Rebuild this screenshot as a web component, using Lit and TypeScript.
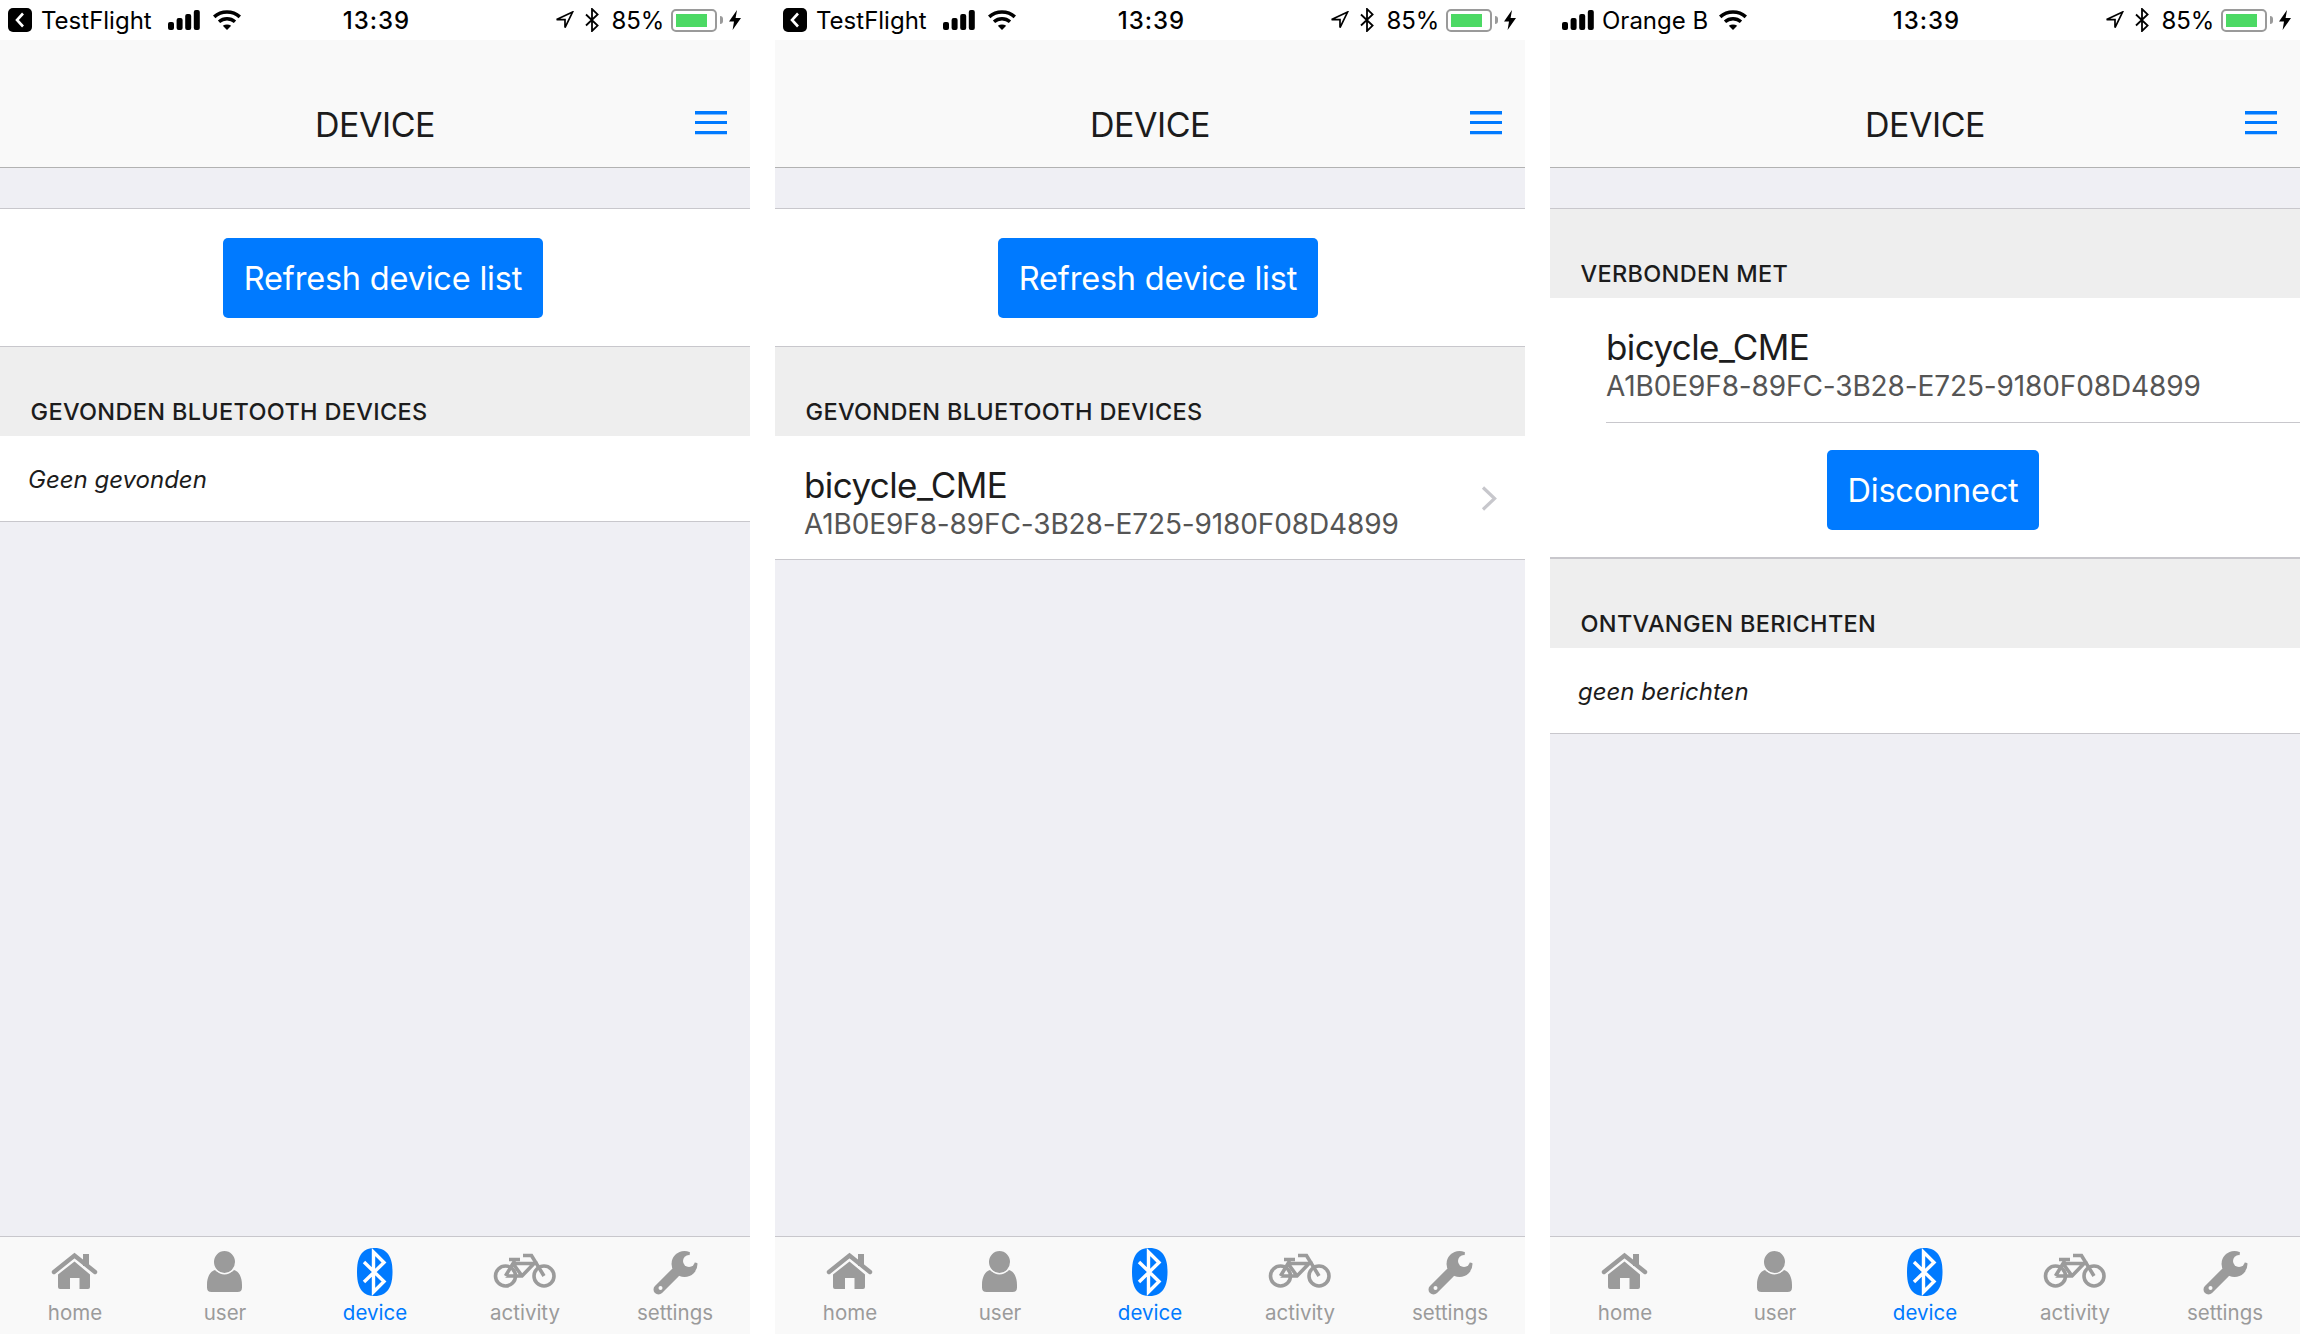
import { LitElement, html, css, svg } from 'lit';
import { customElement, property } from 'lit/decorators.js';

const DEVICE_NAME = 'bicycle_CME';
const DEVICE_UUID = 'A1B0E9F8-89FC-3B28-E725-9180F08D4899';

const signalIcon = svg`<svg class="signal" viewBox="0 0 32 20" width="32" height="20">
  <rect x="0" y="12" width="6" height="8" rx="2"/>
  <rect x="8.6" y="8" width="6" height="12" rx="2"/>
  <rect x="17.2" y="4" width="6" height="16" rx="2"/>
  <rect x="25.8" y="0" width="6" height="20" rx="2"/>
</svg>`;

const wifiIcon = svg`<svg viewBox="0 0 28 20" width="28" height="20" fill="none" stroke="#000">
  <path d="M1.2 6.8C8.4 .4 19.6 .4 26.8 6.800" stroke-width="3.600"/>
  <path d="M6 11.800C10.600 7.800 17.400 7.800 22 11.800" stroke-width="3.400"/>
  <path d="M9.800 15.800C12.300 14 15.700 14 18.200 15.800L14 20Z" fill="#000" stroke="none"/>
</svg>`;

const locationIcon = svg`<svg viewBox="0 0 19 18" width="19" height="18" fill="none" stroke="#000" stroke-width="1.7" stroke-linejoin="miter">
  <path d="M17.6 1 1.6 8.6H10V16.6Z"/>
</svg>`;

const btGlyph = svg`<svg viewBox="0 0 14 24" width="14" height="24" fill="none" stroke="#000" stroke-width="1.8">
  <path d="M1 6.5 12.6 17.6 7 23V1L12.6 6.4 1 17.5"/>
</svg>`;

const boltIcon = svg`<svg viewBox="0 0 12 20" width="12" height="20"><path d="M8 0 0 11.4H5L3.6 20 12 8H6.6Z" fill="#000"/></svg>`;

const menuIcon = svg`<svg viewBox="0 0 32 24" width="32" height="24"><path d="M0 0H32V3.4H0ZM0 10H32V13H0ZM0 20H32V23.2H0Z" fill="#007aff"/></svg>`;

const chevronIcon = svg`<svg viewBox="0 0 16 25" width="16" height="25" fill="none" stroke="#c7c7cc" stroke-width="3.2"><path d="M2 1.5 13.6 12.5 2 23.5"/></svg>`;

const homeIcon = svg`
  <path d="M11 24 31.5 7.5 52 24" fill="none" stroke="currentColor" stroke-width="4.4" stroke-linecap="round"/>
  <rect x="40" y="6" width="6" height="12"/>
  <path d="M15 26.5 31.5 13.4 47 26.5V39a2 2 0 0 1-2 2H36.5V30H27V41H17a2 2 0 0 1-2-2Z"/>`;

const userIcon = svg`
  <path d="M14 37C14 29 17 23.500 22 22 25.500 26.500 37.500 26.500 41 22 46 23.500 49 29 49 37V39.500Q49 44 44.500 44H18.500Q14 44 14 39.500Z"/>
  <ellipse cx="31.500" cy="14" rx="11.200" ry="11.700" stroke="#f9f9f9" stroke-width="1.400"/>`;

const bluetoothIcon = svg`
  <path d="M31.500 0C45 0 49.500 10 49.500 24 49.500 38 45 48 31.500 48 18 48 14 38 14 24 14 10 18 0 31.500 0Z"/>
  <path d="M21 14 41 33.500 30.500 44V4L41 14.500 21 34" fill="none" stroke="#fff" stroke-width="3.400"/>`;

const bikeIcon = svg`
  <g fill="none" stroke="currentColor" stroke-width="3.600">
    <circle cx="12.500" cy="28" r="10"/>
    <circle cx="51" cy="28" r="10"/>
    <path d="M12.500 28H29L41 15.500H20L12.500 28M20 15.500 29 28M21 11.500V15.500"/>
    <path d="M16 11.500H27M30 7.500H38.500L51 28"/>
  </g>`;

const wrenchIcon = svg`
  <circle cx="41.500" cy="16" r="13"/>
  <path d="M46 13 47.500 -1H62V17Z" fill="#f9f9f9"/>
  <circle cx="46" cy="13" r="6" fill="#f9f9f9"/>
  <path d="M32 25 15.500 41.500" fill="none" stroke="currentColor" stroke-width="10" stroke-linecap="round"/>
  <circle cx="17.500" cy="40" r="2" fill="#f9f9f9"/>`;

const TABS = [
  { label: 'home', icon: homeIcon },
  { label: 'user', icon: userIcon },
  { label: 'device', icon: bluetoothIcon, active: true },
  { label: 'activity', icon: bikeIcon },
  { label: 'settings', icon: wrenchIcon },
];

@customElement('device-screen')
export class DeviceScreen extends LitElement {
  // scan-empty, scan-found or connected
  @property({ type: String }) mode = 'scan-empty';

  static styles = css`
    :host {
      display: flex;
      flex-direction: column;
      width: 750px;
      height: 1334px;
      background: #efeff4;
      color: #1c1c1c;
      font-family: Inter, 'Noto Sans', sans-serif;
    }

    .status {
      display: grid;
      grid-template-columns: 1fr auto 1fr;
      align-items: center;
      height: 40px;
      padding: 0 9px 0 8px;
      box-sizing: border-box;
      background: #fff;
      color: #000;
      font-size: 24px;
      flex: none;
    }
    .status-left, .status-right { display: flex; align-items: center; }
    .status-right { justify-content: flex-end; }
    .back {
      display: flex;
      align-items: center;
      justify-content: center;
      width: 24px;
      height: 24px;
      margin-right: 9px;
      border-radius: 5px;
      background: #000;
    }
    .signal { fill: #000; }
    .orange { margin-left: 4px; }
    .carrier { margin-right: 16px; }
    .carrier.operator { margin: 0 11px 0 8px; }
    .spacer-wifi { width: 13px; }
    .time { font-size: 24px; font-weight: 500; letter-spacing: 1px; padding-left: 4px; }
    .battery {
      display: flex;
      width: 46px;
      height: 23px;
      padding: 3px;
      box-sizing: border-box;
      border: 2px solid #9a9a9a;
      border-radius: 5px;
    }
    .battery span { width: 85%; background: #4cd964; }
    .nub { width: 3px; height: 8px; margin: 0 6px 0 3px; background: #9a9a9a; border-radius: 0 3px 3px 0; }
    .gap-bt { width: 11px; }
    .pct { margin: 0 7px 0 13px; letter-spacing: -0.2px; }

    .nav {
      display: grid;
      grid-template-columns: 1fr auto 1fr;
      align-items: center;
      flex: none;
      height: 128px;
      padding-top: 43px;
      box-sizing: border-box;
      background: #f9f9f9;
      border-bottom: 1px solid #b2b2b2;
    }
    .nav h1 { grid-column: 2; margin: 0; font-size: 34px; font-weight: 400; letter-spacing: -0.5px; line-height: 34px; }
    .nav .menu { justify-self: end; margin: 0 23px 4px 0; display: flex; }

    main { flex: 1; padding-top: 40px; }

    .block {
      display: flex;
      justify-content: center;
      padding: 29px 0 28px 16px;
      background: #fff;
      border-top: 1px solid #c8c7cc;
      border-bottom: 1px solid #c8c7cc;
    }
    .block.plain { border-top: none; padding-top: 27px; padding-bottom: 27px; border-bottom-width: 2px; }
    .btn {
      display: flex;
      align-items: center;
      height: 80px;
      padding: 0 20.500px;
      box-sizing: border-box;
      border-radius: 5px;
      background: #007aff;
      color: #fff;
      font-size: 32.500px;
      letter-spacing: -0.2px;
    }

    .header {
      height: 89px;
      padding: 50px 0 0 30.500px;
      box-sizing: border-box;
      background: #eee;
      font-size: 23.500px;
      font-weight: 500;
      letter-spacing: 0.32px;
      line-height: 29px;
    }
    .header.first { border-top: 1px solid #c8c7cc; height: 90px; }

    .row {
      display: flex;
      align-items: center;
      background: #fff;
      border-bottom: 1px solid #c8c7cc;
    }
    .row.empty { height: 83px; padding: 2px 0 0 28px; font-size: 24px; font-style: italic; }
    .row.device {
      height: 124px;
      box-sizing: border-box;
      padding: 10px 28px 0 29px;
      justify-content: space-between;
    }
    .row .chevron { display: flex; margin-bottom: 8px; }

    .connected { background: #fff; padding-left: 56px; }
    .connected .info { height: 125px; border-bottom: 1px solid #c8c7cc; box-sizing: border-box; padding-top: 27px; }

    .name { font-size: 35px; line-height: 44px; letter-spacing: -0.6px; }
    .uuid { font-size: 28px; line-height: 35px; letter-spacing: -0.12px; color: #555; }

    .tabs {
      display: grid;
      grid-template-columns: repeat(5, 1fr);
      flex: none;
      height: 98px;
      box-sizing: border-box;
      background: #f9f9f9;
      border-top: 1px solid #c8c7cc;
    }
    .tab {
      display: flex;
      flex-direction: column;
      align-items: center;
      padding-top: 11px;
      color: #9b9b9b;
      font-size: 20.500px;
      line-height: 26px;
    }
    .tab svg { fill: currentColor; margin-bottom: 4px; }
    .tab.active { color: #007aff; }
  `;

  renderStatus() {
    const connected = this.mode === 'connected';
    return html`
      <div class="status">
        <div class="status-left">
          ${connected
            ? html`<span class="orange"></span>${signalIcon}<span class="carrier operator">Orange B</span>`
            : html`
                <span class="back">
                  <svg viewBox="0 0 10 16" width="10" height="16" fill="none" stroke="#fff" stroke-width="2.600"><path d="M8 1.500 2 8l6 6.500"/></svg>
                </span>
                <span class="carrier">TestFlight</span>${signalIcon}<span class="spacer-wifi"></span>`}
          ${wifiIcon}
        </div>
        <div class="time">13:39</div>
        <div class="status-right">
          ${locationIcon}<span class="gap-bt"></span>${btGlyph}
          <span class="pct">85%</span>
          <span class="battery"><span></span></span><span class="nub"></span>${boltIcon}
        </div>
      </div>
    `;
  }

  renderTabs() {
    return html`
      <nav class="tabs">
        ${TABS.map(
          (t) => html`
            <div class="tab ${t.active ? 'active' : ''}">
              <svg viewBox="0 0 64 48" width="64" height="48">${t.icon}</svg>
              <span>${t.label}</span>
            </div>
          `
        )}
      </nav>
    `;
  }

  renderScan() {
    return html`
      <div class="block"><div class="btn">Refresh device list</div></div>
      <div class="header">GEVONDEN BLUETOOTH DEVICES</div>
      ${this.mode === 'scan-found'
        ? html`
            <div class="row device">
              <div>
                <div class="name">${DEVICE_NAME}</div>
                <div class="uuid">${DEVICE_UUID}</div>
              </div>
              <span class="chevron">${chevronIcon}</span>
            </div>
          `
        : html`<div class="row empty">Geen gevonden</div>`}
    `;
  }

  renderConnected() {
    return html`
      <div class="header first">VERBONDEN MET</div>
      <div class="connected">
        <div class="info">
          <div class="name">${DEVICE_NAME}</div>
          <div class="uuid">${DEVICE_UUID}</div>
        </div>
      </div>
      <div class="block plain"><div class="btn">Disconnect</div></div>
      <div class="header">ONTVANGEN BERICHTEN</div>
      <div class="row empty">geen berichten</div>
    `;
  }

  render() {
    return html`
      ${this.renderStatus()}
      <header class="nav">
        <h1>DEVICE</h1>
        <span class="menu">${menuIcon}</span>
      </header>
      <main>${this.mode === 'connected' ? this.renderConnected() : this.renderScan()}</main>
      ${this.renderTabs()}
    `;
  }
}

@customElement('app-root')
export class AppRoot extends LitElement {
  static styles = css`
    :host {
      display: flex;
      justify-content: space-between;
      width: 2300px;
      height: 1334px;
      background: #fff;
    }
  `;

  render() {
    return html`
      <device-screen mode="scan-empty"></device-screen>
      <device-screen mode="scan-found"></device-screen>
      <device-screen mode="connected"></device-screen>
    `;
  }
}
